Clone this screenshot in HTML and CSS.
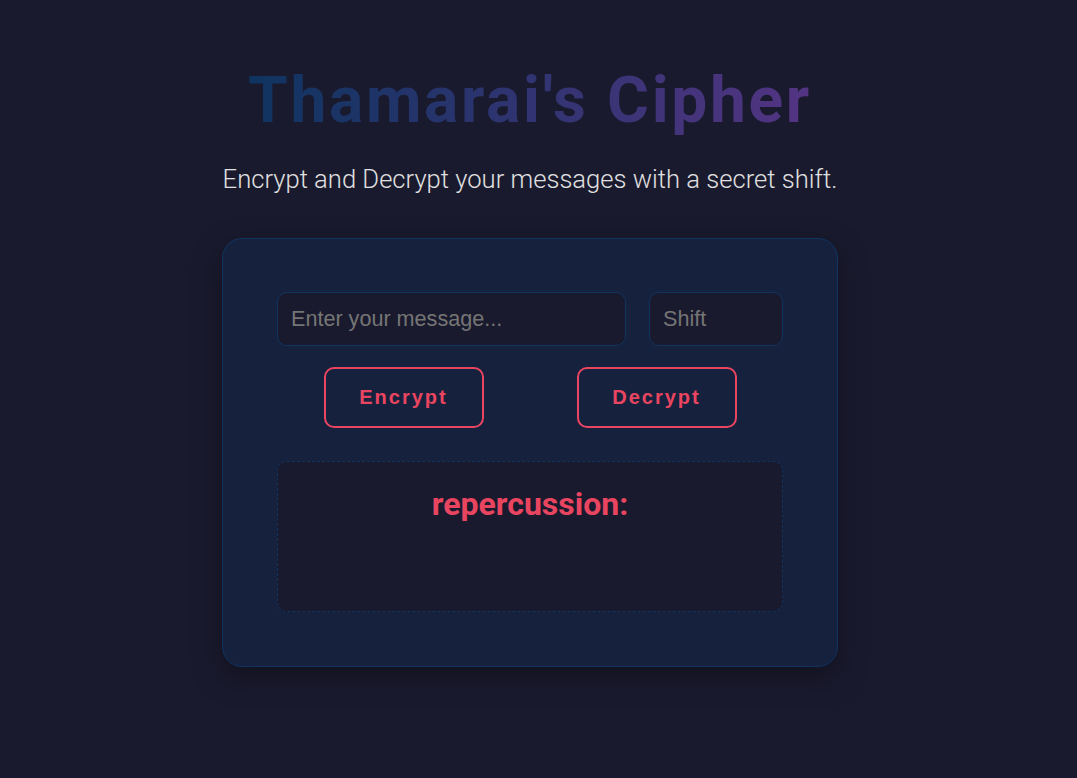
FILE: index.html
```html
<!DOCTYPE html>
<html lang="en">
<head>
<meta charset="UTF-8">
<title>Thamarai's Cipher</title>
<link rel="stylesheet" href="styles.css">
</head>
<body>
<main class="page">
  <h1 class="title">Thamarai's Cipher</h1>
  <p class="subtitle">Encrypt and Decrypt your messages with a secret shift.</p>
  <section class="card">
    <div class="inputs">
      <input class="field field-message" type="text" placeholder="Enter your message...">
      <input class="field field-shift" type="number" placeholder="Shift">
    </div>
    <div class="actions">
      <button class="btn">Encrypt</button>
      <button class="btn">Decrypt</button>
    </div>
    <div class="result">
      <h2 class="result-title">repercussion:</h2>
    </div>
  </section>
</main>
</body>
</html>
```
FILE: styles.css
```css
* { box-sizing: border-box; }
html, body { margin: 0; padding: 0; }
body {
  background: #1a1a2e;
  font-family: Roboto, "Liberation Sans", sans-serif;
  color: #e0e0e0;
  min-height: 778px;
}
.page {
  display: flex;
  flex-direction: column;
  align-items: center;
  padding-top: 63px;
  padding-right: 17px;
}
.title {
  margin: 0;
  font-size: 64px;
  font-weight: 700;
  letter-spacing: 2.7px;
  line-height: 76px;
  background: linear-gradient(90deg, #0f3460, #533483);
  -webkit-background-clip: text;
  background-clip: text;
  color: transparent;
}
.subtitle {
  margin: 24px 0 0;
  font-size: 25.6px;
  font-weight: 300;
  line-height: 32px;
  color: #e0e0e0;
}
.card {
  margin-top: 43px;
  width: 616px;
  background: #16213e;
  border: 1px solid #0f3460;
  border-radius: 20px;
  padding: 53px 54px 54px;
  box-shadow: 0 10px 30px rgba(0,0,0,0.35);
}
.inputs {
  display: flex;
  gap: 23px;
}
.field {
  height: 54px;
  background: #1a1a2e;
  border: 1px solid #0f3460;
  border-radius: 10px;
  padding: 0 13px;
  font-family: "Liberation Sans", Arial, sans-serif;
  font-size: 21.6px;
  color: #e0e0e0;
  outline: none;
}
.field::placeholder { color: #757575; }
.field-message { flex: 1; min-width: 0; }
.field-shift { width: 134px; -moz-appearance: textfield; }
.field-shift::-webkit-inner-spin-button,
.field-shift::-webkit-outer-spin-button { -webkit-appearance: none; margin: 0; }
.actions {
  display: flex;
  justify-content: space-around;
  margin-top: 21px;
}
.btn {
  width: 160px;
  height: 61px;
  background: transparent;
  border: 2px solid #e94560;
  border-radius: 10px;
  color: #e94560;
  font-family: "Liberation Sans", Arial, sans-serif;
  font-size: 20px;
  font-weight: 700;
  letter-spacing: 2px;
  cursor: pointer;
}
.result {
  margin-top: 33px;
  height: 151px;
  background: #1a1a2e;
  border: 1px dashed #0f3460;
  border-radius: 10px;
  padding-top: 22px;
  text-align: center;
}
.result-title {
  margin: 0;
  font-size: 32px;
  font-weight: 700;
  line-height: 40px;
  color: #e94560;
}
```
